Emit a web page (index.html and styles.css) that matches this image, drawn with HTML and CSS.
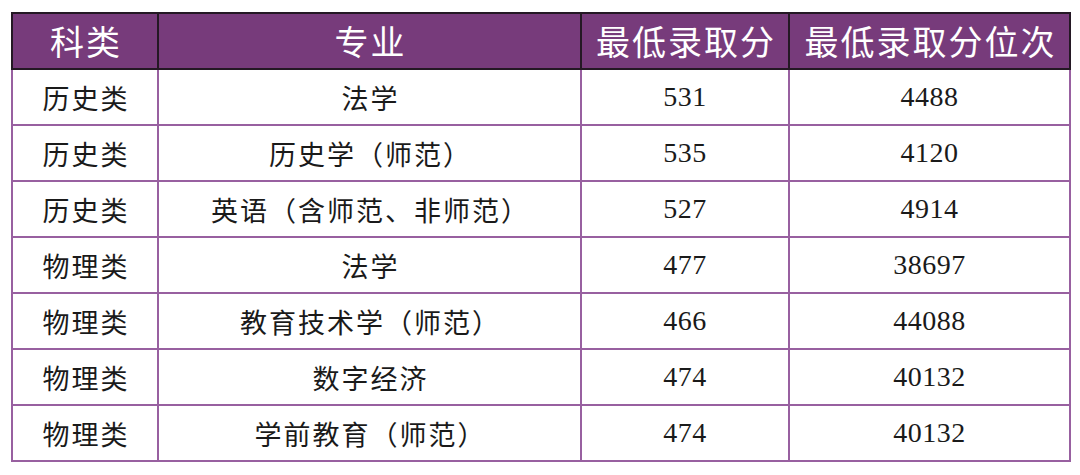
FILE: index.html
```html
<!DOCTYPE html>
<html lang="zh">
<head>
<meta charset="utf-8">
<link rel="stylesheet" href="styles.css">
</head>
<body>
<table class="scores">
  <colgroup>
    <col class="c1"><col class="c2"><col class="c3"><col class="c4">
  </colgroup>
  <thead>
    <tr><th>科类</th><th>专业</th><th>最低录取分</th><th>最低录取分位次</th></tr>
  </thead>
  <tbody>
    <tr><td>历史类</td><td>法学</td><td class="num">531</td><td class="num">4488</td></tr>
    <tr><td>历史类</td><td>历史学（师范）</td><td class="num">535</td><td class="num">4120</td></tr>
    <tr><td>历史类</td><td>英语（含师范、非师范）</td><td class="num">527</td><td class="num">4914</td></tr>
    <tr><td>物理类</td><td>法学</td><td class="num">477</td><td class="num">38697</td></tr>
    <tr><td>物理类</td><td>教育技术学（师范）</td><td class="num">466</td><td class="num">44088</td></tr>
    <tr><td>物理类</td><td>数字经济</td><td class="num">474</td><td class="num">40132</td></tr>
    <tr><td>物理类</td><td>学前教育（师范）</td><td class="num">474</td><td class="num">40132</td></tr>
  </tbody>
</table>
</body>
</html>
```

FILE: styles.css
```css
html, body {
  margin: 0;
  padding: 0;
  background: #ffffff;
}
body {
  padding: 12px 0 0 11px;
  font-family: "Liberation Serif", "Noto Sans CJK SC", serif;
}
.scores {
  border-collapse: collapse;
  table-layout: fixed;
  width: 1058px;
}
.c1 { width: 146px; }
.c2 { width: 423px; }
.c3 { width: 208px; }
.c4 { width: 281px; }
.scores th {
  background: #773b7b;
  color: #ffffff;
  font-family: "Noto Sans CJK SC", sans-serif;
  font-weight: 400;
  font-size: 34px;
  letter-spacing: 2px;
  height: 54px;
  padding: 0 0 0 2px;
  border: 2px solid #241824;
  text-align: center;
  vertical-align: middle;
  line-height: 1;
}
.scores td {
  height: 54px;
  padding: 0 0 0 2px;
  border: 2px solid #9860a0;
  text-align: center;
  vertical-align: middle;
  font-family: "Noto Sans CJK SC", sans-serif;
  font-size: 27px;
  letter-spacing: 2px;
  color: #1a1a1a;
  line-height: 1;
}
.scores td.num {
  font-family: "Liberation Serif", serif;
  font-size: 28px;
  letter-spacing: 0.5px;
  padding: 0;
}
```
